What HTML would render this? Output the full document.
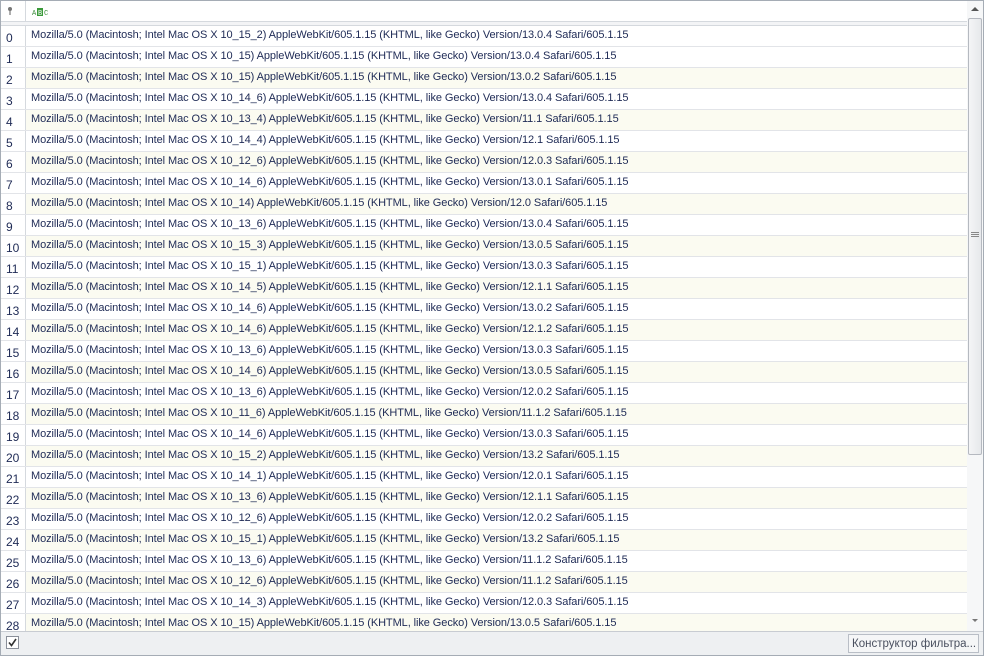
<!DOCTYPE html>
<html><head><meta charset="utf-8"><style>
*{margin:0;padding:0;box-sizing:border-box}
body{width:984px;height:656px;background:#fff;font-family:"Liberation Sans",sans-serif;font-size:11px;color:#1e2a55;position:relative;overflow:hidden}
.frame{position:absolute;left:0;top:0;width:984px;height:656px;border:1px solid #a5acb5}
.hdr{position:absolute;left:1px;top:1px;width:966px;height:21px;background:#fff;border-bottom:1px solid #d5d9de}
.hdr .ind{position:absolute;left:0;top:0;width:25px;height:20px;border-right:1px solid #d5d9de}
.gap{position:absolute;left:1px;top:22px;width:966px;height:4px;background:#f3f4f6;border-bottom:1px solid #d5d9de}
.row{position:absolute;left:1px;width:966px;height:21px;border-bottom:1px solid #e2e4e8}
.row .n{position:absolute;left:0;top:0;width:25px;height:20px;border-right:1px solid #d5d9de;background:#fff;padding:5px 0 0 5px;font-size:12px}
.row .t{position:absolute;left:30px;top:3px;white-space:nowrap;letter-spacing:-0.08px}
.cream{background:#fbfbf1}
.sb{position:absolute;left:967px;top:1px;width:16px;height:630px;background:#f6f7f8}
.thumb{position:absolute;left:968px;top:18px;width:14px;height:437px;border:1px solid #b5b9c0;background:linear-gradient(90deg,#f4f5f6,#e6e8eb);border-radius:2px}
.bot{position:absolute;left:1px;top:631px;width:982px;height:24px;background:#eef0f2;border-top:1px solid #c8ccd2}
.btn{position:absolute;left:848px;top:634px;width:131px;height:19px;border:1px solid #b9bec6;background:#f5f6f7;color:#4a5060;padding:3px 0 0 3px;white-space:nowrap;font-size:11.5px}
.cb{position:absolute;left:6px;top:636px;width:13px;height:13px;border:1px solid #8a8f99;background:#fff}
</style></head><body>
<div class="frame"></div>
<div class="hdr"><div class="ind"><svg width="25" height="20"><circle cx="9" cy="8" r="2" fill="#777"/><rect x="8.4" y="9" width="1.2" height="5" fill="#777"/></svg></div>
<svg style="position:absolute;left:31px;top:6px" width="20" height="10"><text x="0" y="8" font-size="7" fill="#3a8a3a" font-family="Liberation Mono">A</text><rect x="5" y="1" width="6" height="8" fill="#3a9a3a"/><text x="6" y="8" font-size="7" fill="#fff" font-family="Liberation Mono">B</text><text x="12" y="8" font-size="7" fill="#3a8a3a" font-family="Liberation Mono">C</text></svg></div>
<div class="gap"></div>
<div id="rows"></div>
<div class="sb"><svg width="16" height="16"><path d="M4 10 L8 6 L12 10Z" fill="#555"/></svg><svg style="position:absolute;left:0;top:612px" width="16" height="16"><path d="M5 6 L8 9 L11 6Z" fill="#777"/></svg></div>
<div class="thumb"><svg style="position:absolute;left:2px;top:213px" width="8" height="6"><path d="M0 .5H8M0 2.5H8M0 4.5H8" stroke="#888" stroke-width="1"/></svg></div>
<div class="bot"></div>
<div class="cb"><svg width="11" height="11"><path d="M2 5.5 L4.5 8.5 L9 2" stroke="#333" stroke-width="1.6" fill="none"/></svg></div>
<div class="btn">Конструктор фильтра...</div>
<script>
var d=[["10_15_2","13.0.4"],["10_15","13.0.4"],["10_15","13.0.2"],["10_14_6","13.0.4"],["10_13_4","11.1"],["10_14_4","12.1"],["10_12_6","12.0.3"],["10_14_6","13.0.1"],["10_14","12.0"],["10_13_6","13.0.4"],["10_15_3","13.0.5"],["10_15_1","13.0.3"],["10_14_5","12.1.1"],["10_14_6","13.0.2"],["10_14_6","12.1.2"],["10_13_6","13.0.3"],["10_14_6","13.0.5"],["10_13_6","12.0.2"],["10_11_6","11.1.2"],["10_14_6","13.0.3"],["10_15_2","13.2"],["10_14_1","12.0.1"],["10_13_6","12.1.1"],["10_12_6","12.0.2"],["10_15_1","13.2"],["10_13_6","11.1.2"],["10_12_6","11.1.2"],["10_14_3","12.0.3"],["10_15","13.0.5"]];
var h="";d.forEach(function(r,i){
h+='<div class="row'+(i>0&&i%2==0?' cream':'')+'" style="top:'+(26+i*21)+'px"><div class="n">'+i+'</div><div class="t">Mozilla/5.0 (Macintosh; Intel Mac OS X '+r[0]+') AppleWebKit/605.1.15 (KHTML, like Gecko) Version/'+r[1]+' Safari/605.1.15</div></div>';});
document.getElementById("rows").innerHTML=h;
</script>
</body></html>
